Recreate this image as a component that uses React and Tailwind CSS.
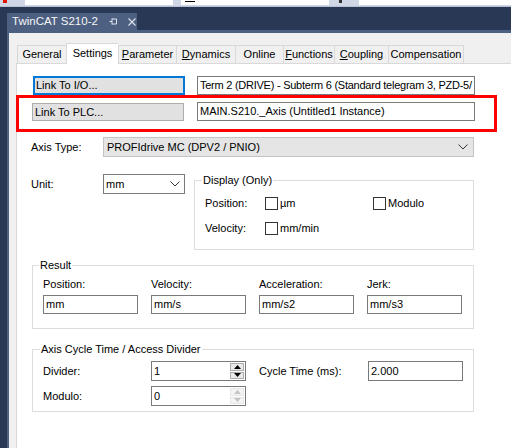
import React from 'react';

const font = { fontFamily: '"Liberation Sans", Arial, sans-serif' };

function Chevron() {
  return (
    <svg width="10" height="6" viewBox="0 0 10 6" className="shrink-0">
      <polyline points="0.5,0.5 5,5 9.5,0.5" fill="none" stroke="#333" strokeWidth="1" />
    </svg>
  );
}

function TextBox({ value, className = '' }) {
  return (
    <div className={`h-[19px] border border-[#7a7a7a] bg-white flex items-center pl-[2px] overflow-hidden whitespace-nowrap ${className}`}>
      {value}
    </div>
  );
}

function Check({ label }) {
  return (
    <div className="flex items-center">
      <div className="w-[13px] h-[13px] border border-[#333] bg-white" />
      <span className="ml-[2px]">{label}</span>
    </div>
  );
}

function Spin({ value, disabled }) {
  const arrow = disabled ? '#c4c4c4' : '#000';
  return (
    <div className="w-[95px] h-[20px] border border-[#7a7a7a] bg-white flex">
      <div className="flex-1 flex items-center pl-[2px]">{value}</div>
      <div className="w-[16px] flex flex-col p-px gap-px">
        <div className={`flex-1 flex items-center justify-center ${disabled ? 'border border-[#e6e6e6] bg-[#f4f4f4]' : 'border border-[#adadad] bg-[#e9e9e9]'}`}>
          <svg width="7" height="4" viewBox="0 0 7 4"><polygon points="0,4 3.5,0 7,4" fill={arrow} /></svg>
        </div>
        <div className={`flex-1 flex items-center justify-center ${disabled ? 'border border-[#e6e6e6] bg-[#f4f4f4]' : 'border border-[#adadad] bg-[#e9e9e9]'}`}>
          <svg width="7" height="4" viewBox="0 0 7 4"><polygon points="0,0 3.5,4 7,0" fill={arrow} /></svg>
        </div>
      </div>
    </div>
  );
}

const tabs = [
  { w: 49, label: 'General' },
  { w: 52, label: 'Settings', active: true },
  { w: 58, u: 'P', rest: 'arameter' },
  { w: 59, u: 'D', rest: 'ynamics' },
  { w: 48, label: 'Online' },
  { w: 51, u: 'F', rest: 'unctions' },
  { w: 54, u: 'C', rest: 'oupling' },
  { w: 76, label: 'Compensation' },
];

export default function App() {
  return (
    <div className="w-[511px] h-[448px] overflow-hidden bg-[#293955] flex flex-col text-[11px] leading-[13px] text-black" style={font}>
      {/* toolbar remnant */}
      <div className="h-[7px] bg-[#cfd6e5] flex items-start border-b border-[#b8c0d2] shrink-0">
        <div className="w-[4px] h-[3px] bg-[#e51400] ml-[3px]" />
        <div className="w-[148px] h-[5px] bg-white ml-[18px]" />
        <div className="w-[148px] h-[5px] bg-white ml-[8px] flex items-start pl-[4px]">
          <div className="w-[10px] h-[2px] border-b border-black" />
        </div>
        <div className="w-[3px] h-[3px] bg-[#333] ml-[10px]" />
        <div className="w-[152px] h-[5px] bg-white ml-[17px]" />
      </div>

      {/* document tab */}
      <div className="h-[23px] pt-[6px] pl-[7px] flex shrink-0">
        <div className="w-[130px] h-[17px] bg-[#4d6082] text-[#f5f5f5] flex items-center pl-[5px] text-[11.5px]">
          <span>TwinCAT S210-2</span>
          <svg width="9" height="9" viewBox="0 0 9 9" className="ml-[11px]">
            <path d="M0.5 4.5H3M3 1.5V7.5M3 2H7.5V7H3" fill="none" stroke="#dfe4ee" strokeWidth="1" />
          </svg>
          <svg width="8" height="8" viewBox="0 0 8 8" className="ml-[10px]">
            <path d="M0.5 0.5L7.5 7.5M7.5 0.5L0.5 7.5" stroke="#dfe4ee" strokeWidth="1.1" />
          </svg>
        </div>
      </div>
      <div className="h-[3px] ml-[7px] bg-[#4d6082] shrink-0" />

      {/* property pane */}
      <div className="flex-1 flex ml-[7px] border-l-2 border-[#4d6082] bg-[#f0f0f0] min-h-0">
        <div className="flex-1 flex flex-col pt-[10px] ml-[7px]">
          <div className="h-[20px] flex items-end pl-px shrink-0">
            {tabs.map((t, i) => (
              <div
                key={i}
                style={{ width: t.w }}
                className={`flex items-center justify-center border-t border-l border-[#d9d9d9] ${i === tabs.length - 1 ? 'border-r' : ''} ${t.active ? 'h-[21px] bg-white -mb-px relative z-10 pb-[2px]' : 'h-[18px] bg-[#f0f0f0]'}`}
              >
                {t.label ? t.label : (<><span className="underline">{t.u}</span>{t.rest}</>)}
              </div>
            ))}
          </div>

          <div className="flex-1 bg-white border-t border-l border-[#d9d9d9] flex flex-col">
            {/* link to io */}
            <div className="mt-[12px] flex">
              <div className="ml-[16px] w-[152px] h-[19px] border-2 border-[#0078d7] bg-[#e1e1e1] flex items-center pl-[1px]">Link To I/O...</div>
              <TextBox className="ml-[12px] w-[278px] tracking-[-0.25px]" value="Term 2 (DRIVE) - Subterm 6 (Standard telegram 3, PZD-5/" />
            </div>

            {/* link to plc, highlighted */}
            <div className="-ml-px w-[481px] h-[37px] border-[3px] border-[#ff0000] flex items-start pt-[4px]">
              <div className="ml-[13px] mt-px w-[152px] h-[18px] border border-[#adadad] bg-[#e1e1e1] flex items-center pl-[2px]">Link To PLC...</div>
              <TextBox className="ml-[13px] w-[278px]" value="MAIN.S210._Axis (Untitled1 Instance)" />
            </div>

            {/* axis type */}
            <div className="mt-[5px] flex items-center">
              <div className="ml-[14px] w-[72px]">Axis Type:</div>
              <div className="w-[371px] h-[20px] border border-[#c4c4c4] bg-[#e5e5e5] flex items-center pl-[3px] pr-[5px]">
                <span className="flex-1">PROFIdrive MC (DPV2 / PNIO)</span>
                <Chevron />
              </div>
            </div>

            {/* unit + display */}
            <div className="mt-[17px] flex items-start">
              <div className="ml-[14px] w-[72px] mt-[4px]">Unit:</div>
              <div className="w-[82px] h-[20px] border border-[#7a7a7a] bg-white flex items-center pl-[2px] pr-[4px]">
                <span className="flex-1">mm</span>
                <Chevron />
              </div>
              <fieldset className="ml-[9px] w-[280px] border border-[#dcdcdc]">
                <legend className="ml-[7px] px-[1px]">Display (Only)</legend>
                <div className="pl-[10px] pt-[10px] pb-[14px]">
                  <div className="flex items-center h-[13px]">
                    <div className="w-[60px]">Position:</div>
                    <div className="w-[108px]"><Check label="µm" /></div>
                    <Check label="Modulo" />
                  </div>
                  <div className="flex items-center h-[13px] mt-[12px]">
                    <div className="w-[60px]">Velocity:</div>
                    <Check label="mm/min" />
                  </div>
                </div>
              </fieldset>
            </div>

            {/* result */}
            <fieldset className="mt-[9px] ml-[15px] w-[442px] border border-[#dcdcdc]">
              <legend className="ml-[6px] px-[1px]">Result</legend>
              <div className="pl-[10px] pt-[6px] pb-[14px] grid grid-cols-[95px_95px_95px_95px] gap-x-[13px]">
                <div>Position:</div>
                <div>Velocity:</div>
                <div>Acceleration:</div>
                <div>Jerk:</div>
                <TextBox className="mt-[4px]" value="mm" />
                <TextBox className="mt-[4px]" value="mm/s" />
                <TextBox className="mt-[4px]" value="mm/s2" />
                <TextBox className="mt-[4px]" value="mm/s3" />
              </div>
            </fieldset>

            {/* cycle time */}
            <fieldset className="mt-[14px] ml-[15px] w-[442px] border border-[#dcdcdc]">
              <legend className="ml-[7px] px-[1px]">Axis Cycle Time / Access Divider</legend>
              <div className="pl-[10px] pt-[5px] pb-[5px]">
                <div className="flex items-center">
                  <div className="w-[108px]">Divider:</div>
                  <Spin value="1" />
                  <div className="ml-[13px] w-[109px]">Cycle Time (ms):</div>
                  <TextBox className="w-[95px] h-[20px]" value="2.000" />
                </div>
                <div className="flex items-center mt-[5px]">
                  <div className="w-[108px]">Modulo:</div>
                  <Spin value="0" disabled />
                </div>
              </div>
            </fieldset>
          </div>
        </div>
      </div>
    </div>
  );
}
